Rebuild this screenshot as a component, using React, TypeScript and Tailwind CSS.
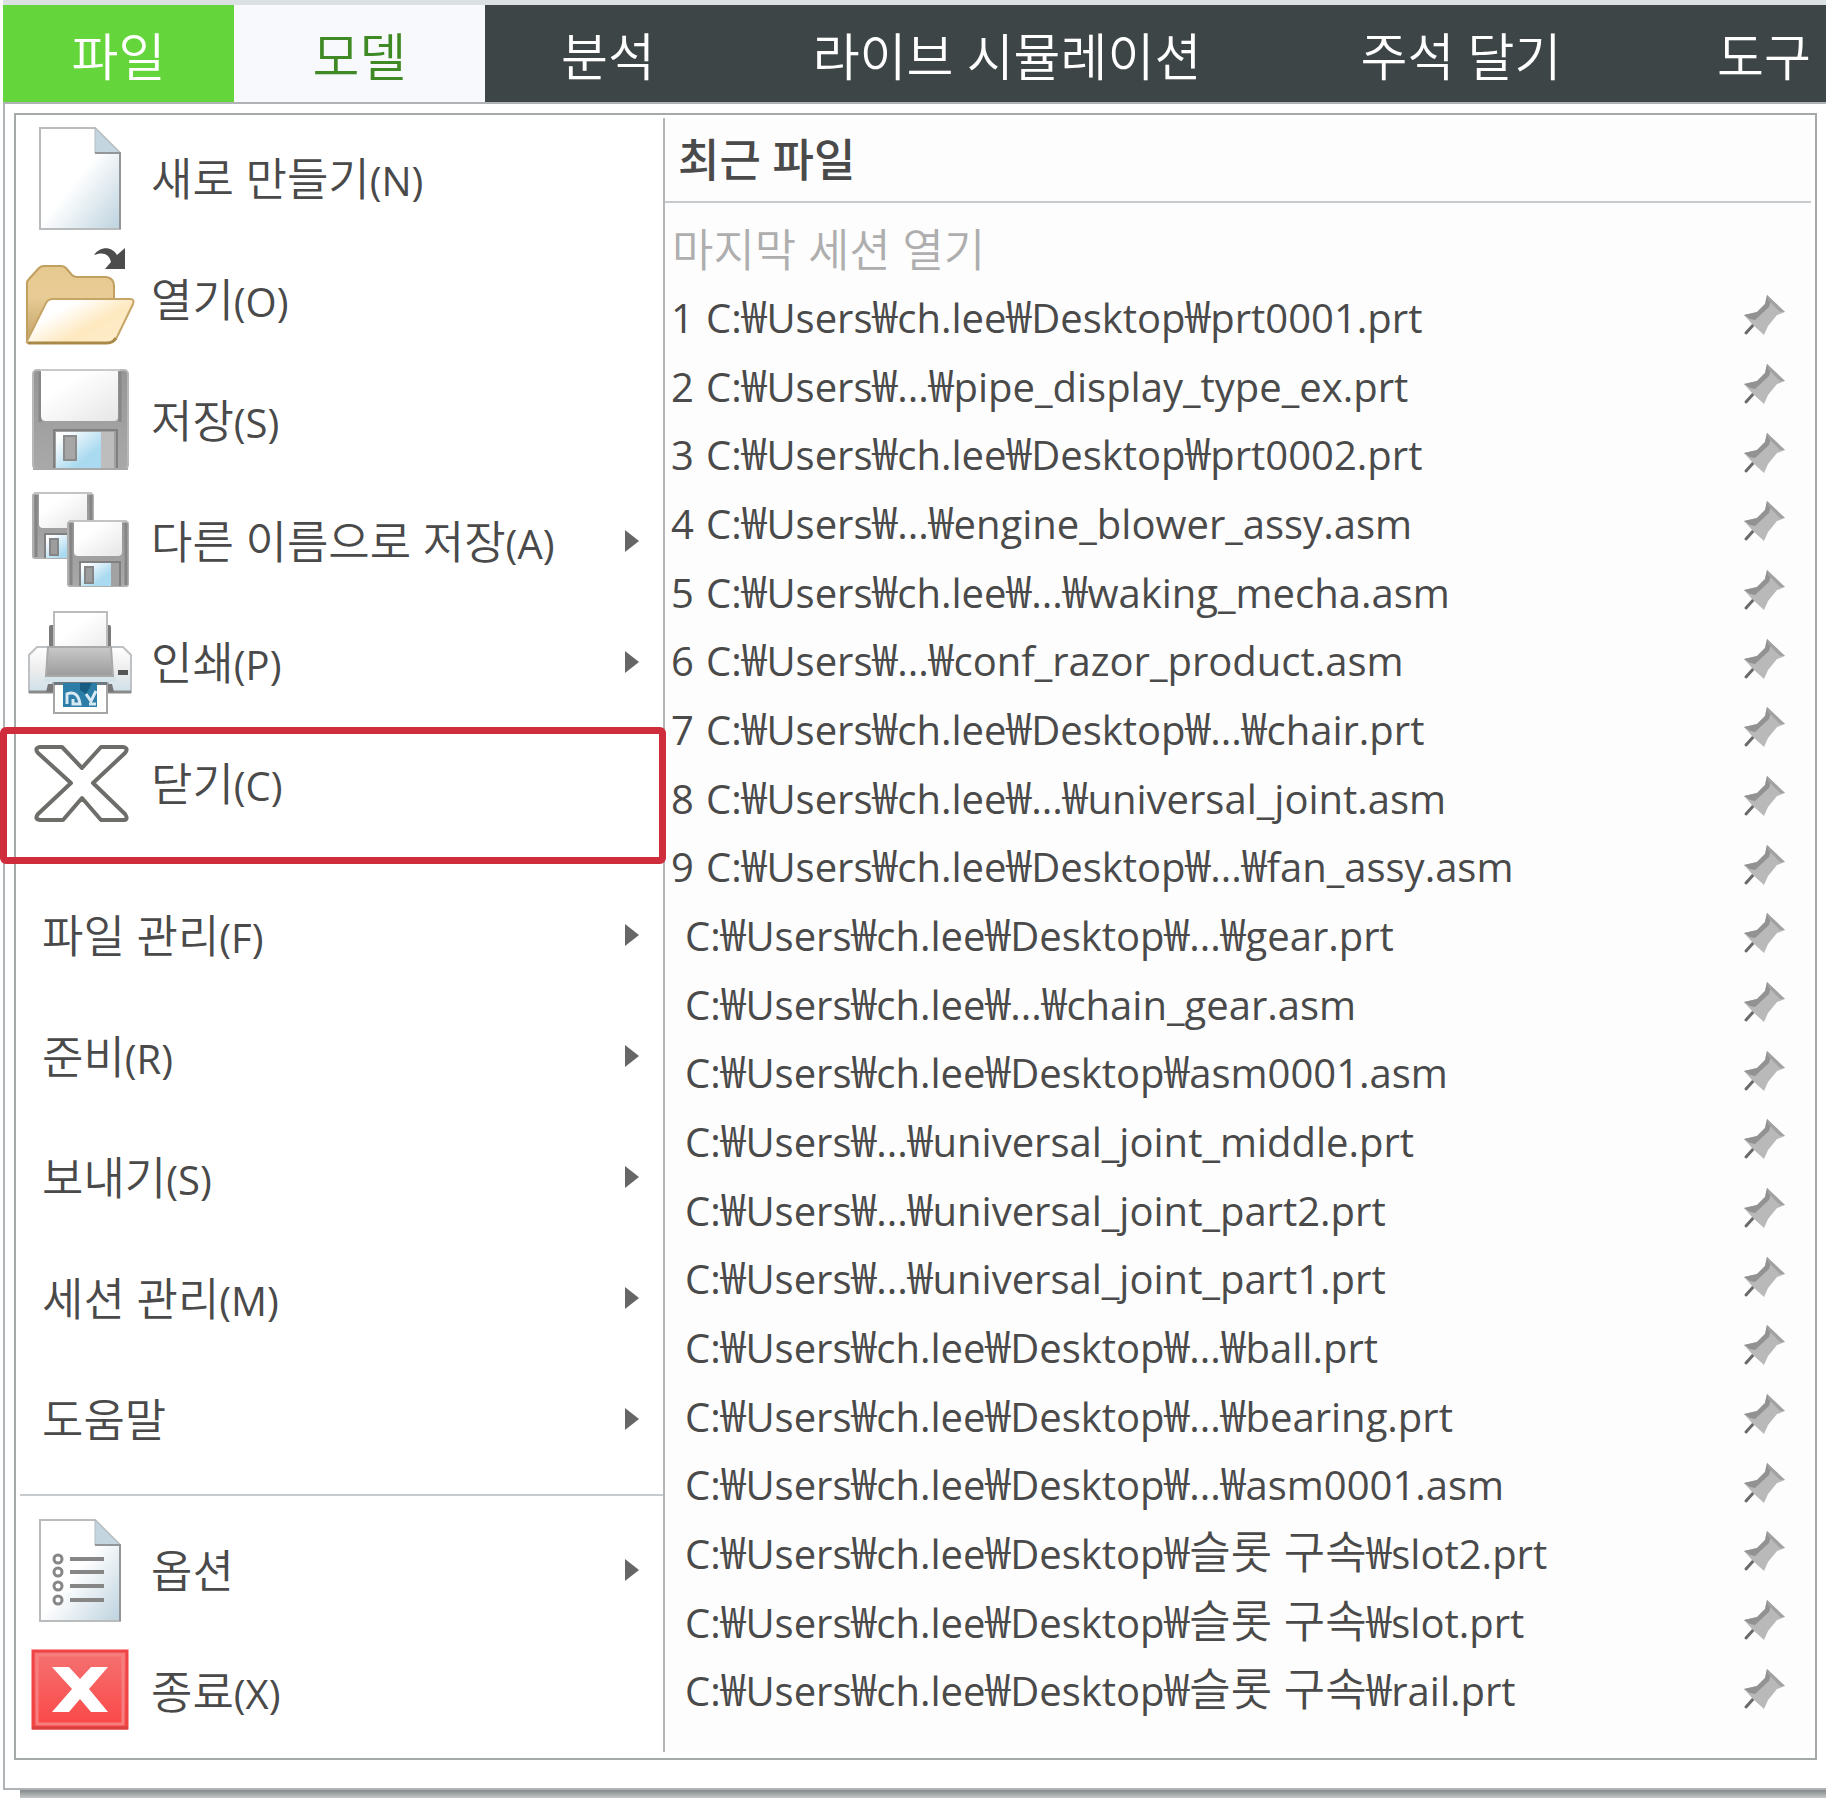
import React from "react";

const DocBase = () => (
  <>
    <defs>
      <linearGradient id="doc-fill" x1="0.2" y1="0.2" x2="1" y2="1">
        <stop offset="0.35" stopColor="#ffffff" />
        <stop offset="1" stopColor="#bdd2de" />
      </linearGradient>
    </defs>
    <path d="M20 8H75L100 33V109H20Z" fill="url(#doc-fill)" stroke="#b9bcbd" strokeWidth="2" />
    <path d="M75 8L100 33H75Z" fill="#c3d6e0" stroke="#b3bbc0" strokeWidth="1" />
    <path d="M75 33H100V109" fill="none" stroke="#929698" strokeWidth="2" />
  </>
);

const Icon = ({ children }: { children: React.ReactNode }) => (
  <svg viewBox="0 0 120 121" className="h-[121px] w-[120px] shrink-0" aria-hidden="true">
    {children}
  </svg>
);

const NewIcon = () => (
  <Icon>
    <DocBase />
  </Icon>
);

const OpenIcon = () => (
  <Icon>
    <defs>
      <linearGradient id="folder-back" x1="0" y1="0" x2="0" y2="1">
        <stop offset="0" stopColor="#e6c98f" />
        <stop offset="0.4" stopColor="#e8cc95" />
        <stop offset="1" stopColor="#c0a066" />
      </linearGradient>
      <linearGradient id="folder-front" x1="0.1" y1="0.2" x2="0.9" y2="0.8">
        <stop offset="0.2" stopColor="#ffffff" />
        <stop offset="0.65" stopColor="#fee9c0" />
        <stop offset="1" stopColor="#feecc9" />
      </linearGradient>
    </defs>
    <path d="M7 99V42Q7 40 9 38L19 27Q21 25 24 25H41Q44 25 46 27L52 34Q54 36 57 36H86Q94 37 94 45V75L50 102H10Q7 102 7 99Z" fill="url(#folder-back)" stroke="#c09f5f" strokeWidth="2" />
    <path d="M7 100L26 62Q28 58 33 58H110Q115 58 113 63L98 94Q95 102 87 102H9Q6 102 7 100Z" fill="url(#folder-front)" stroke="#c6a566" strokeWidth="2" />
    <path d="M8 102H87Q93 102 96 97" fill="none" stroke="#a88948" strokeWidth="3" />
    <path d="M74 14C80 5 92 5 97 14L105 7V28H85L91 21C89 12 82 11 74 14Z" fill="#4c4c4c" />
  </Icon>
);

const DiskDefs = () => (
  <defs>
    <linearGradient id="disk-body" x1="0" y1="0" x2="0" y2="1">
      <stop offset="0" stopColor="#969696" />
      <stop offset="1" stopColor="#a9a9a9" />
    </linearGradient>
    <linearGradient id="disk-label" x1="0" y1="0" x2="1" y2="1">
      <stop offset="0.3" stopColor="#ffffff" />
      <stop offset="1" stopColor="#e6e6e6" />
    </linearGradient>
    <linearGradient id="disk-shutter" x1="0" y1="0" x2="1" y2="1">
      <stop offset="0.1" stopColor="#ffffff" />
      <stop offset="0.7" stopColor="#aadaf0" />
    </linearGradient>
  </defs>
);

const SaveIcon = () => (
  <Icon>
    <DiskDefs />
    <rect x="13" y="8" width="95" height="99" rx="4" fill="url(#disk-body)" stroke="#b8b8b8" strokeWidth="2" />
    <path d="M20 10V60M100 10V60" stroke="#878787" strokeWidth="3" />
    <path d="M21 8H98V55Q98 59 94 59H26Q21 59 21 54Z" fill="url(#disk-label)" />
    <path d="M20 8H100" stroke="#c9c9c9" strokeWidth="2" />
    <path d="M34 106V68H97V106" fill="#a0a0a0" stroke="#808080" strokeWidth="2" />
    <rect x="81" y="70" width="13" height="36" fill="#bdbdbd" />
    <rect x="36" y="70" width="45" height="36" fill="url(#disk-shutter)" />
    <rect x="44" y="74" width="12" height="24" fill="#a6a6a6" stroke="#8b8b8b" strokeWidth="2" />
    <path d="M13 107H108" stroke="#a8a8a8" strokeWidth="2" />
  </Icon>
);

const SmallDisk = () => (
  <>
    <rect x="13" y="11" width="60" height="64" rx="2" fill="url(#disk-body)" stroke="#b0b0b0" strokeWidth="2" />
    <path d="M16 12V74M71 12V74" stroke="#858585" strokeWidth="3" />
    <path d="M19 11H67V41Q67 45 63 45H23Q19 45 19 41Z" fill="url(#disk-label)" />
    <path d="M14 10H72" stroke="#c4c4c4" strokeWidth="2" />
    <path d="M25 75V51H65V75" fill="#a2a2a2" stroke="#808080" strokeWidth="2" />
    <rect x="26" y="52" width="30" height="23" fill="url(#disk-shutter)" />
    <rect x="30" y="56" width="8" height="16" fill="#9d9d9d" stroke="#858585" strokeWidth="2" />
  </>
);

const SaveAsIcon = () => (
  <Icon>
    <DiskDefs />
    <SmallDisk />
    <g transform="translate(35 28)">
      <SmallDisk />
    </g>
  </Icon>
);

const PrintIcon = () => (
  <Icon>
    <defs>
      <linearGradient id="print-mid" x1="0" y1="0" x2="0" y2="1">
        <stop offset="0" stopColor="#c9c9c9" />
        <stop offset="1" stopColor="#9b9b9b" />
      </linearGradient>
      <linearGradient id="print-side" x1="0" y1="0" x2="0" y2="1">
        <stop offset="0" stopColor="#ffffff" />
        <stop offset="0.5" stopColor="#ededed" />
        <stop offset="1" stopColor="#cfe0e9" />
      </linearGradient>
      <linearGradient id="print-paper" x1="0" y1="0" x2="1" y2="1">
        <stop offset="0.4" stopColor="#ffffff" />
        <stop offset="1" stopColor="#ececec" />
      </linearGradient>
    </defs>
    <rect x="29" y="21" width="62" height="24" rx="2" fill="#7a7a7a" />
    <rect x="34" y="8" width="53" height="36" fill="url(#print-paper)" stroke="#bcbcbc" strokeWidth="2" />
    <path d="M17 43H103L111 51V88H9V51Z" fill="url(#print-side)" stroke="#bfc2c4" strokeWidth="2" />
    <path d="M9 88H34V78M87 78V88H111" fill="none" stroke="#8b8b8b" strokeWidth="3" />
    <path d="M26 88L28 80H34V88ZM87 80H92L94 88H87Z" fill="#777777" />
    <path d="M28 43H91L93 72H26Z" fill="url(#print-mid)" stroke="#a9a9a9" strokeWidth="2" />
    <rect x="24" y="73" width="72" height="5" fill="#d5e2ea" />
    <rect x="98" y="66" width="10" height="5" fill="#555555" />
    <rect x="34" y="79" width="53" height="30" fill="#ffffff" stroke="#a5a5a5" strokeWidth="2" />
    <rect x="34" y="78" width="53" height="3" fill="#6c7980" />
    <rect x="43" y="79" width="34" height="24" fill="#2c7da8" />
    <path d="M60 79H72L66 90L60 86Z" fill="#175c82" />
    <path d="M47 100V90Q58 86 60 100H53V95M66 90L71 97L76 87M69 100H76" fill="none" stroke="#d6e9f2" strokeWidth="3" />
  </Icon>
);

const CloseIcon = () => (
  <Icon>
    <path
      d="M20 22H42L62 43L81 22H103Q109 23 105 28L73 58L105 89Q109 95 103 95H81L62 73L43 95H20Q14 94 18 89L51 58L18 28Q14 23 20 22Z"
      fill="#ffffff"
      stroke="#6d6d69"
      strokeWidth="4"
      strokeLinejoin="round"
    />
  </Icon>
);

const OptionsIcon = () => (
  <Icon>
    <DocBase />
    {[47, 60, 74, 88].map((y) => (
      <g key={y} fill="none" stroke="#868686">
        <circle cx="38" cy={y} r="4" strokeWidth="3" />
        <path d={`M50 ${y}H84`} strokeWidth="4" />
      </g>
    ))}
  </Icon>
);

const ExitIcon = () => (
  <Icon>
    <defs>
      <linearGradient id="exit-fill" x1="0" y1="0" x2="0" y2="1">
        <stop offset="0" stopColor="#f57272" />
        <stop offset="1" stopColor="#fb4646" />
      </linearGradient>
    </defs>
    <rect x="13" y="18" width="94" height="77" fill="url(#exit-fill)" stroke="#f04444" strokeWidth="3" />
    <rect x="17" y="22" width="86" height="69" fill="none" stroke="#f77e7e" strokeWidth="3" />
    <path d="M12 95H108" stroke="#d94040" strokeWidth="3" />
    <path d="M32 34H49L60 46L71 34H88L69 56L88 79H71L60 66L49 79H32L52 56Z" fill="#ffffff" />
  </Icon>
);

const Pin = () => (
  <svg viewBox="0 0 42 42" className="mb-1 block h-[42px] w-[42px]" aria-hidden="true">
    <path d="M3 39L12 29" stroke="#6a6a6a" strokeWidth="3" strokeLinecap="round" />
    <path d="M24 1L42 18L34 21L25 32L21 41L9 30L1 21L14 18L22 10Z" fill="#b9b9b9" />
    <path d="M24 1L28 6L26 13L12 26L7 25L1 21L14 18L22 10Z" fill="#929292" />
    <path d="M24 1L42 18L37 18L25 6Z" fill="#a2a2a2" />
  </svg>
);

type Item = { label: string; icon?: () => React.ReactElement; sub?: boolean; marked?: boolean };

const mainItems: Item[] = [
  { label: "새로 만들기(N)", icon: NewIcon },
  { label: "열기(O)", icon: OpenIcon },
  { label: "저장(S)", icon: SaveIcon },
  { label: "다른 이름으로 저장(A)", icon: SaveAsIcon, sub: true },
  { label: "인쇄(P)", icon: PrintIcon, sub: true },
  { label: "닫기(C)", icon: CloseIcon, marked: true },
];

const groupItems: Item[] = [
  { label: "파일 관리(F)", sub: true },
  { label: "준비(R)", sub: true },
  { label: "보내기(S)", sub: true },
  { label: "세션 관리(M)", sub: true },
  { label: "도움말", sub: true },
];

const footItems: Item[] = [
  { label: "옵션", icon: OptionsIcon, sub: true },
  { label: "종료(X)", icon: ExitIcon },
];

const recent = [
  "C:₩Users₩ch.lee₩Desktop₩prt0001.prt",
  "C:₩Users₩...₩pipe_display_type_ex.prt",
  "C:₩Users₩ch.lee₩Desktop₩prt0002.prt",
  "C:₩Users₩...₩engine_blower_assy.asm",
  "C:₩Users₩ch.lee₩...₩waking_mecha.asm",
  "C:₩Users₩...₩conf_razor_product.asm",
  "C:₩Users₩ch.lee₩Desktop₩...₩chair.prt",
  "C:₩Users₩ch.lee₩...₩universal_joint.asm",
  "C:₩Users₩ch.lee₩Desktop₩...₩fan_assy.asm",
  "C:₩Users₩ch.lee₩Desktop₩...₩gear.prt",
  "C:₩Users₩ch.lee₩...₩chain_gear.asm",
  "C:₩Users₩ch.lee₩Desktop₩asm0001.asm",
  "C:₩Users₩...₩universal_joint_middle.prt",
  "C:₩Users₩...₩universal_joint_part2.prt",
  "C:₩Users₩...₩universal_joint_part1.prt",
  "C:₩Users₩ch.lee₩Desktop₩...₩ball.prt",
  "C:₩Users₩ch.lee₩Desktop₩...₩bearing.prt",
  "C:₩Users₩ch.lee₩Desktop₩...₩asm0001.asm",
  "C:₩Users₩ch.lee₩Desktop₩슬롯 구속₩slot2.prt",
  "C:₩Users₩ch.lee₩Desktop₩슬롯 구속₩slot.prt",
  "C:₩Users₩ch.lee₩Desktop₩슬롯 구속₩rail.prt",
];

/* Hangul and the won sign are set a little larger and lighter than the Latin text around them. */
const MixedText = ({ text }: { text: string }) => (
  <span className="text-[40px] leading-none">
    {text.split(/(₩|[가-힣][가-힣 ]*)/).map((part, n) =>
      /[₩가-힣]/.test(part) ? (
        <span key={n} className="text-[45px] leading-none font-light">
          {part}
        </span>
      ) : (
        part
      ),
    )}
  </span>
);

const MenuRow = ({ item }: { item: Item }) => {
  const Glyph = item.icon;
  return (
    <li className="relative">
      <button type="button" className="flex h-[121px] w-full items-center pr-6 text-left whitespace-nowrap">
        {Glyph ? <Glyph /> : null}
        <span className={Glyph ? "flex-1 pb-1 pl-[11px]" : "flex-1 pb-1 pl-[22px]"}>
          <MixedText text={item.label} />
        </span>
        {item.sub ? (
          <svg viewBox="0 0 14 24" className="mb-1 h-6 w-[14px]" aria-hidden="true">
            <path d="M0 0L14 11L0 22Z" fill="#666666" />
          </svg>
        ) : null}
      </button>
      {item.marked ? (
        <span className="pointer-events-none absolute top-[2px] -right-[3px] -left-5 z-10 h-[137px] rounded-md border-[7px] border-[#cf2d3b]" />
      ) : null}
    </li>
  );
};

const tabs = [
  { label: "파일", cls: "w-[231px] bg-[#64d63b] text-white" },
  { label: "모델", cls: "w-[251px] bg-[#f7f9fc] text-[#3f8a25]" },
  { label: "분석", cls: "w-[246px] text-white" },
  { label: "라이브 시뮬레이션", cls: "w-[552px] text-white" },
  { label: "주석 달기", cls: "w-[356px] text-white" },
  { label: "도구", cls: "w-[250px] text-white" },
];

export default function App() {
  return (
    <div className="overflow-hidden bg-white font-['Open_Sans','Noto_Sans_CJK_KR_DemiLight','Noto_Sans_CJK_KR',sans-serif] text-[#4a4a4a]">
      <div className="ml-[3px] border-t-[5px] border-[#dbe1e2] bg-[#3d4546]">
        <nav className="flex h-[97px] overflow-hidden text-[51px] leading-none">
          {tabs.map((t) => (
            <button key={t.label} type="button" className={`shrink-0 pt-1.5 font-[350] whitespace-nowrap ${t.cls}`}>
              {t.label}
            </button>
          ))}
        </nav>
      </div>

      <div className="ml-[3px] border-2 border-r-0 border-[#b0b3b5] pt-[9px] pr-[9px] pb-[28px] pl-[9px]">
        <div className="flex border-2 border-[#a6a9aa]">
          <ul className="w-[647px] shrink-0 pt-[5px] pb-1 pl-1 text-[45px] leading-none">
            {mainItems.map((i) => (
              <MenuRow key={i.label} item={i} />
            ))}
            <li className="h-[31px]" aria-hidden="true" />
            {groupItems.map((i) => (
              <MenuRow key={i.label} item={i} />
            ))}
            <li className="mt-[12px] mb-[16px] border-t-2 border-[#c8cbcd]" aria-hidden="true" />
            {footItems.map((i) => (
              <MenuRow key={i.label} item={i} />
            ))}
          </ul>

          <section className="mt-[3px] mr-[4px] mb-[6px] flex min-w-0 flex-1 flex-col border-l-2 border-[#b3b5b6] bg-[#fdfdfd] pb-[27px]">
            <h2 className="flex h-[85px] items-center border-b-2 border-[#c8cbcd] pl-[13px] font-['Open_Sans','Noto_Sans_CJK_KR',sans-serif] text-[45px] font-medium">
              최근 파일
            </h2>
            <button
              type="button"
              disabled
              className="flex h-[80px] items-center pt-[14px] pl-[7px] text-left text-[45px] font-light text-[#aeaeae]"
            >
              마지막 세션 열기
            </button>
            <ul className="flex flex-1 flex-col text-[40px] leading-none">
              {recent.map((path, n) => (
                <li key={path} className="flex flex-1 items-center pr-[26px] whitespace-nowrap">
                  <a href="#" className="flex flex-1 items-baseline pb-1 pl-[6px]">
                    {n < 9 ? <span className="w-[35px]">{n + 1}</span> : <span className="w-[14px]" />}
                    <MixedText text={path} />
                  </a>
                  <button type="button" aria-label="고정">
                    <Pin />
                  </button>
                </li>
              ))}
            </ul>
          </section>
        </div>
      </div>
      <div className="ml-5 h-2 bg-gradient-to-b from-[#858889] to-[#c6c9ca]" />
    </div>
  );
}
